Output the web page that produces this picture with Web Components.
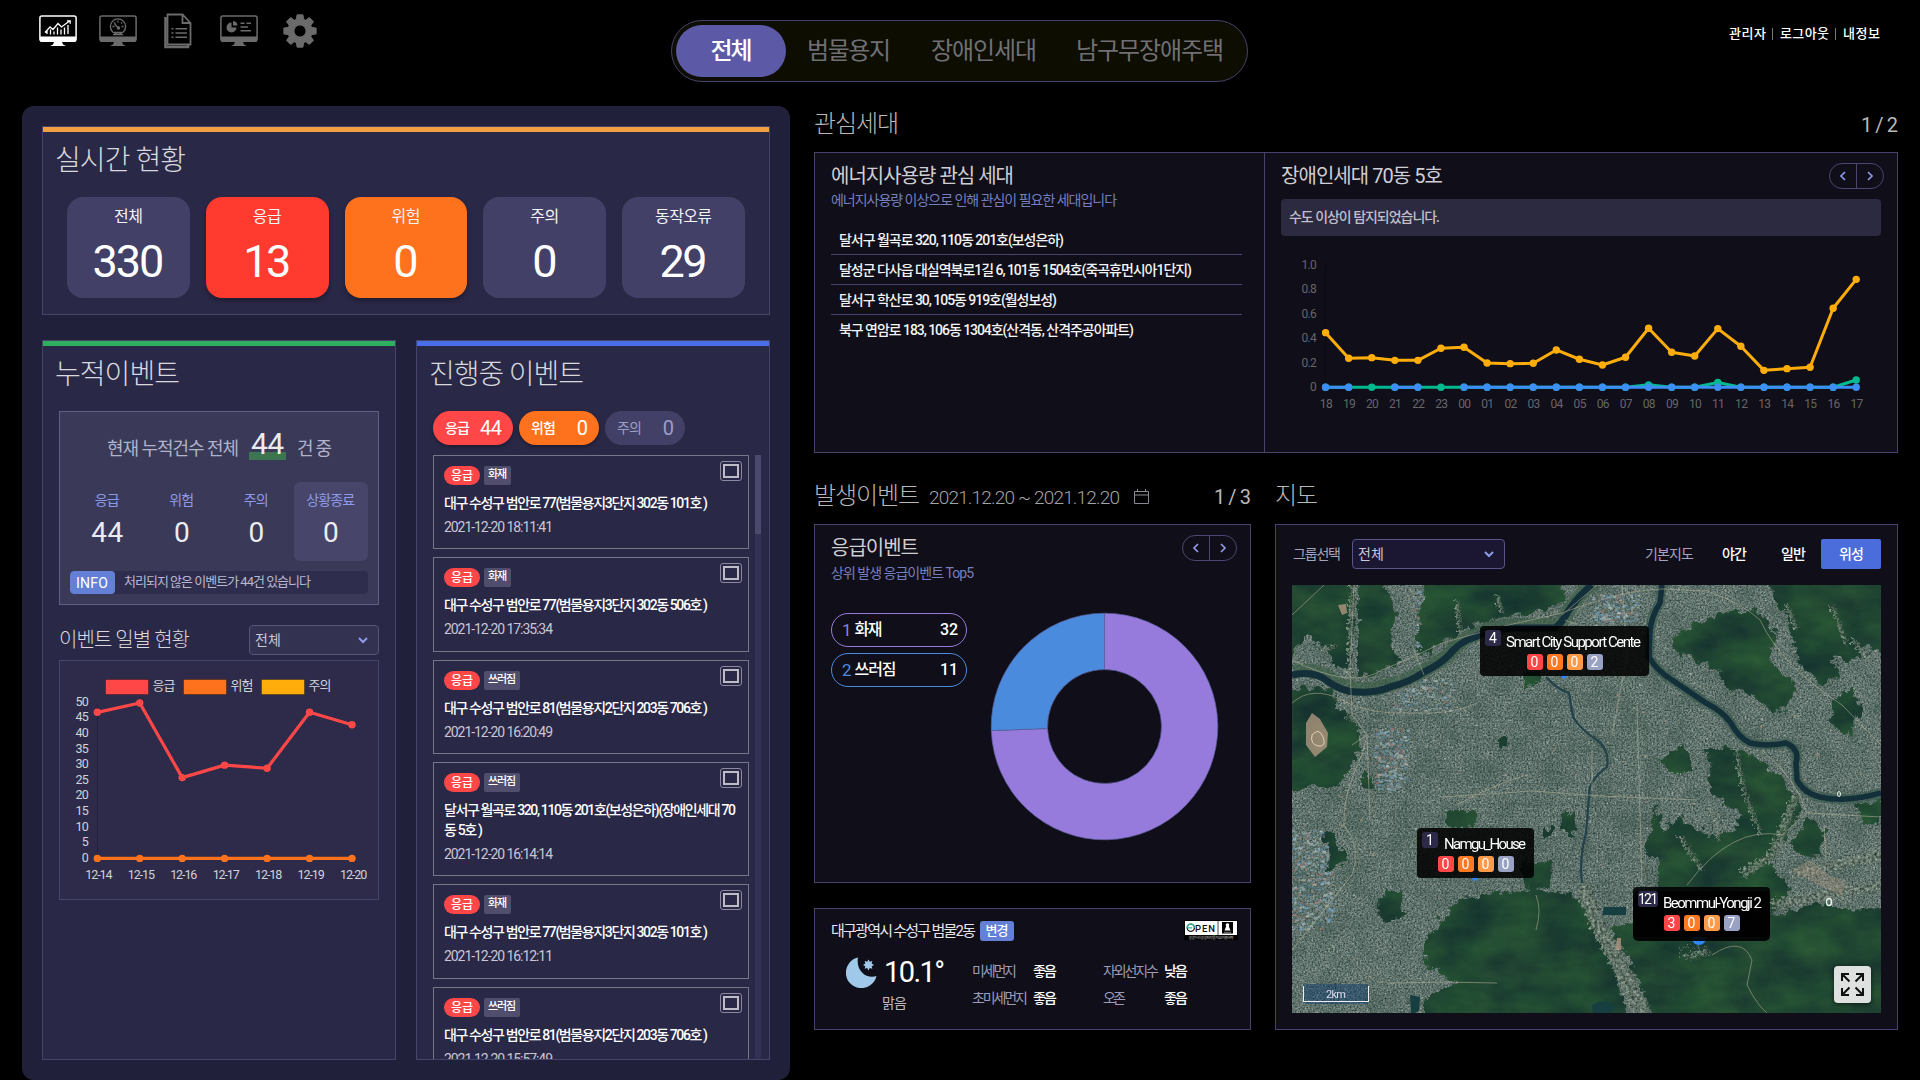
<!DOCTYPE html>
<html lang="ko">
<head>
<meta charset="utf-8">
<title>통합 관제 대시보드</title>
<style>
html,body{margin:0;background:#000;}
body{width:1920px;height:1080px;overflow:hidden;font-family:Roboto,"Noto Sans CJK KR",sans-serif;color:#ccc;}
</style>
</head>
<body>
<dash-app></dash-app>
<script>
const FONT='Roboto,"Noto Sans CJK KR",sans-serif';
const measureCtx=document.createElement('canvas').getContext('2d');
function mount(el,html){const r=el.attachShadow({mode:'open'});r.innerHTML=html;return r;}
const BOX='*,*:before{box-sizing:border-box}';

/* Single line of text tracked to a given width: s size, w width, c colour, b weight, lh line height */
class UiText extends HTMLElement{
  connectedCallback(){
    if(this.shadowRoot)return;
    const a=(n,d)=>this.getAttribute(n)||d;
    const s=a('s','14'),b=a('b','400'),c=a('c','inherit'),lh=a('lh','20'),w=this.getAttribute('w');
    let ls=-1;
    const t=this.textContent;
    if(w&&t.length>1){measureCtx.font=`${b} ${s}px ${FONT}`;ls=(parseFloat(w)+1-measureCtx.measureText(t).width)/(t.length-1);}
    mount(this,`<style>:host{display:block;white-space:pre;font-weight:${b};font-size:${s}px;color:${c};line-height:${lh}px;letter-spacing:${ls.toFixed(3)}px;margin-right:${(-ls).toFixed(3)}px;flex:none}</style><slot></slot>`);
  }
}
customElements.define('ui-text',UiText);

/* Toolbar icons */
const gear=(()=>{let d='';const n=8;for(let i=0;i<n;i++){const a=i*Math.PI*2/n-Math.PI/2;
  [[-.3,12.2],[-.18,16.4],[.18,16.4],[.3,12.2]].forEach(([o,r],k)=>{d+=(i||k?'L':'M')+(17+r*Math.cos(a+o)).toFixed(2)+' '+(17+r*Math.sin(a+o)).toFixed(2);});}
  return d+'Z M17 11a6 6 0 1 0 .01 0Z';})();
const monitor=inner=>`<svg width="38" height="32" viewBox="0 0 38 32" fill="none" stroke="currentColor"><rect x=".9" y=".9" width="36.2" height="25.2" rx="2" stroke-width="1.5"/><path d="M1 21.5h36v4.2q0 1.3-1.5 1.3h-33Q1 27 1 25.700z" fill="currentColor" stroke="none"/><path d="M15 27h8l1 2.600 3 1.400H11l3-1.400z" fill="currentColor" stroke="none"/>${inner}</svg>`;
const ICONS={
 chart:monitor('<path d="M6 17.500l5-5.500 3 2.500 5-6 3.500 3.500L30.500 6M28 5.800h3.200v3M8 19v-3M11.500 19.500v-5M15 19.500v-3M18.500 19.500v-7M22 19.500v-5M25.500 19.500v-7M29 19v-9" stroke-width="1.3"/>'),
 gauge:monitor('<circle cx="19" cy="11.500" r="7.600" stroke-width="1.400"/><path d="M19 5.500v2M13.500 11.500h2M22.500 11.500h2M15 7.500l1.400 1.400M23 7.500l-1 1M15.500 9l4 4" stroke-width="1.300"/><circle cx="19.500" cy="13" r="1.800" fill="currentColor" stroke="none"/><path d="M14 19.600h10M15 17.500h8" stroke-width="1.400"/>'),
 doc:'<svg width="28" height="36" viewBox="0 0 28 36" fill="none" stroke="currentColor" stroke-width="1.800"><path d="M3.500 1.500h15l8 8.500v21.500h-23zM18.500 1.500v8.500h8"/><path d="M1.500 4v30h22.500v-2" stroke-width="2.600"/><path d="M7.500 15.800h2M7.500 20h2M7.500 24.200h2M11.500 15.800h11.500M11.500 20h11.500M11.500 24.200h11.500" stroke-width="1.600"/></svg>',
 report:monitor('<path d="M11.500 7.500a5 5 0 1 0 5 5h-5z" fill="currentColor" stroke="none"/><path d="M13 6a5 5 0 0 1 4.500 4.500H13z" fill="currentColor" stroke="none"/><path d="M20.500 8.300h4M26.500 8.300h4.500M20.500 12h7.500M20.500 15.800h10.500" stroke-width="1.400"/>'),
 gear:`<svg width="34" height="34" viewBox="0 0 34 34"><path d="${gear}" fill="currentColor" fill-rule="evenodd" stroke="currentColor" stroke-width="1" stroke-linejoin="round"/></svg>`
};
class ToolIcon extends HTMLElement{connectedCallback(){if(this.shadowRoot)return;
  mount(this,`<style>:host{display:block;color:${this.hasAttribute('on')?'#fff':'#6b6b6b'}}svg{display:block}</style>${ICONS[this.getAttribute('name')]}`);}}
customElements.define('tool-icon',ToolIcon);

class TopBar extends HTMLElement{connectedCallback(){if(this.shadowRoot)return;
 mount(this,`<style>${BOX}:host{display:grid;grid-template-columns:632px 577px 1fr;height:106px;padding:0 40px 0 39px}
 .icons{display:flex;gap:22px;padding-top:15px;align-items:flex-start}
 .icons :nth-child(3){margin:-2px 6px 0 5px}.icons :nth-child(5){margin:-1px 0 0 3px}
 nav{margin-top:20px;height:62px;border:1px solid #45426b;border-radius:31px;background:#0d0d02;display:flex;align-items:center;padding-left:4px;color:#707074}
 .on{width:110px;height:52px;border-radius:26px;background:#5c5aa7;color:#fff;display:flex;justify-content:center;align-items:center}
 .user{display:flex;justify-content:flex-end;align-items:center;height:20px;margin-top:24px;color:#fff}
 i{width:1px;height:12px;background:#777;margin:0 7px 0 6px}</style>
 <div class="icons"><tool-icon name="chart" on></tool-icon><tool-icon name="gauge"></tool-icon><tool-icon name="doc"></tool-icon><tool-icon name="report"></tool-icon><tool-icon name="gear"></tool-icon></div>
 <nav><div class="on"><ui-text s="24" w="41" b="500" lh="50" style="padding-left:1px">전체</ui-text></div>
 <ui-text s="24" w="83" lh="50" style="margin-left:21px">범물용지</ui-text><ui-text s="24" w="105" lh="50" style="margin-left:40px">장애인세대</ui-text><ui-text s="24" w="147" lh="50" style="margin-left:39px">남구무장애주택</ui-text></nav>
 <div class="user"><ui-text s="13" w="36" b="500">관리자</ui-text><i></i><ui-text s="13" w="48" b="500">로그아웃</ui-text><i></i><ui-text s="13" w="36" b="500">내정보</ui-text></div>`);}}
customElements.define('top-bar',TopBar);

/* Framed card with coloured top bar */
class UiCard extends HTMLElement{connectedCallback(){if(this.shadowRoot)return;
 mount(this,`<style>${BOX}:host{display:flex;flex-direction:column;box-sizing:border-box;border:1px solid #46446b;background:#2a2847;overflow:hidden}
 .bar{height:5px;flex:none;background:${this.getAttribute('bar')}}.t{padding-left:12px;padding-top:1px;margin-top:7px;height:40px;flex:none;color:#d8d8de}</style>
 <div class="bar"></div><div class="t"><ui-text s="28" b="300" lh="42" w="${this.getAttribute('tw')}">${this.getAttribute('label')}</ui-text></div><slot></slot>`);}}
customElements.define('ui-card',UiCard);

class StatusTile extends HTMLElement{connectedCallback(){if(this.shadowRoot)return;
 const bg=this.getAttribute('bg')||'#434067';
 mount(this,`<style>:host{display:flex;flex:1;height:101px;border-radius:16px;background:${bg};flex-direction:column;align-items:center;color:#fff;${this.hasAttribute('bg')?'box-shadow:0 3px 5px rgba(0,0,0,.3)':''}}</style>
 <ui-text s="16" lh="40" c="#f4f4f8" w="${this.getAttribute('lw')}">${this.getAttribute('label')}</ui-text><ui-text s="45" lh="50" w="${this.getAttribute('vw')}">${this.getAttribute('value')}</ui-text>`);}}
customElements.define('status-tile',StatusTile);

class UiSelect extends HTMLElement{connectedCallback(){if(this.shadowRoot)return;
 mount(this,`<style>${BOX}:host{display:flex;box-sizing:border-box;align-items:center;justify-content:space-between;height:30px;border:1px solid var(--bd,#57557a);border-radius:4px;background:var(--bg,#343251);padding:0 10px 0 5px;color:#c8c8de}</style>
 <ui-text s="14" w="25" lh="28">전체</ui-text><svg width="10" height="7" viewBox="0 0 10 7" fill="none" stroke="#8e9ae8" stroke-width="2"><path d="M1 1l4 4 4-4"/></svg>`);}}
customElements.define('ui-select',UiSelect);

class CountSummary extends HTMLElement{connectedCallback(){if(this.shadowRoot)return;
 const col=(l,w,v,vw,on)=>`<div class="c${on?' on':''}"><ui-text s="14" w="${w}" lh="20" c="#8e9ae8">${l}</ui-text><ui-text s="28" w="${vw}" lh="34" c="#ececf0">${v}</ui-text></div>`;
 mount(this,`<style>${BOX}:host{display:block;box-sizing:border-box;height:194px;border:1px solid #625f87;background:#3a3957;padding:0 10px}
 .h{display:flex;align-items:center;padding-left:37px;height:70px;color:#b0b3cc}
 .n{margin:0 11px 0 10px;padding:0 2px;background:linear-gradient(#3d7550,#3d7550) 0 23px/100% 8px no-repeat;height:34px;margin-top:-2px}
 .g{display:grid;grid-template-columns:repeat(4,1fr)}.c{height:79px;display:flex;flex-direction:column;align-items:center;padding-top:8px;gap:6px}.on{background:#474569;border-radius:6px}
 .i{display:flex;margin-top:10px;height:23px;background:#2f2d4d;border-radius:4px;overflow:hidden;color:#b8b9d0}
 .b{width:45px;background:#6480d6;display:flex;padding-left:6px;color:#fff;border-radius:4px;margin-right:9px}</style>
 <div class="h"><ui-text s="18" w="131" lh="34" style="margin-top:3px">현재 누적건수 전체</ui-text><div class="n"><ui-text s="30" w="32" lh="30" c="#ececf0">44</ui-text></div><ui-text s="18" w="34" lh="34" style="margin-top:3px">건 중</ui-text></div>
 <div class="g">${col('응급',24,'44',31)}${col('위험',24,'0',15)}${col('주의',24,'0',15)}${col('상황종료',48,'0',15,1)}</div>
 <div class="i"><div class="b"><ui-text s="14" w="31" lh="24">INFO</ui-text></div><ui-text s="13" w="186" lh="22">처리되지 않은 이벤트가 44건 있습니다</ui-text></div>`);}}
customElements.define('count-summary',CountSummary);

const line=(pts,c,w,r)=>`<polyline points="${pts.map(p=>p.join()).join(' ')}" fill="none" stroke="${c}" stroke-width="${w}" stroke-linejoin="round"/>`+pts.map(p=>`<circle cx="${p[0]}" cy="${p[1]}" r="${r}" fill="${c}"/>`).join('');
class DailyChart extends HTMLElement{connectedCallback(){if(this.shadowRoot)return;
 const X=i=>97.3+i*42.45,Y=v=>858.4-v*3.108;let s='';
 [['응급','#ff4747',105],['위험','#ff721d',183],['주의','#ffad0a',261]].forEach(([t,c,x])=>{s+=`<rect x="${x+.5}" y="679.5" width="43" height="15" fill="${c}" stroke="#000" stroke-opacity=".3"/><text x="${x+47.5}" y="690" style="font-size:13px;letter-spacing:-1px">${t}</text>`;});
 for(let v=0;v<=50;v+=5)s+=`<text x="88" y="${857.4-v*3.12+4.3}" text-anchor="end">${v}</text>`;
 for(let i=0;i<7;i++)s+=`<text x="${X(i)+1-13}" y="879.3" style="letter-spacing:-1.1px">12-${14+i}</text>`;
 s+='<path d="M97.500 703v155" stroke="#232140"/>';
 s+=line([47,50,26,30,29,47,43].map((v,i)=>[X(i),Y(v)]),'#ff4747',3.2,3.7)+line([0,0,0,0,0,0,0].map((v,i)=>[X(i),Y(v)]),'#ff721d',3.2,3.7);
 mount(this,`<style>:host{display:block;box-sizing:border-box;height:240px;border:1px solid #46446b;background:#2d2b49}svg{display:block}text{font:12.5px ${FONT};fill:#d2d2da;letter-spacing:-.8px}</style><svg width="318" height="238" viewBox="60 661 318 238">${s}</svg>`);}}
customElements.define('daily-chart',DailyChart);

class CountPill extends HTMLElement{connectedCallback(){if(this.shadowRoot)return;
 const off=this.hasAttribute('off');
 mount(this,`<style>:host{display:flex;box-sizing:border-box;width:80px;height:34px;border-radius:17px;align-items:center;justify-content:space-between;padding:0 11px 0 12px;background:${this.getAttribute('bg')};color:${off?'#9b9ec4':'#fff'};${off?'':'box-shadow:0 2px 4px rgba(0,0,0,.35)'}}</style>
 <ui-text s="14" w="24" lh="34" b="${off?400:500}">${this.getAttribute('label')}</ui-text><ui-text s="20" w="${this.getAttribute('vw')}" lh="35">${this.getAttribute('value')}</ui-text>`);}}
customElements.define('count-pill',CountPill);

class EventItem extends HTMLElement{connectedCallback(){if(this.shadowRoot)return;
 const k=this.getAttribute('kind');
 mount(this,`<style>${BOX}:host{display:block;box-sizing:border-box;flex:none;position:relative;border:1px solid #77758a;padding:10px 10px 0;height:${this.hasAttribute('two')?114.2:94.4}px}
 .r{display:flex;gap:4px;height:19px;color:#fff;margin-bottom:8px}.a{width:36px;border-radius:10px;background:#ff4747;display:flex;justify-content:center}.k{padding:0 4px;background:#504e6c;border-radius:2px}
 .x{position:absolute;top:5px;right:6px;width:22px;height:20px;border:1px solid #8b89a0;border-radius:3px;padding:2px}.x:before{content:"";display:block;width:16px;height:14px;border:2px solid #bdbbc8}
 .d{margin-top:4px;width:max-content}</style>
 <div class="r"><div class="a"><ui-text s="12" w="21" lh="20" b="500">응급</ui-text></div><div class="k"><ui-text s="11" lh="18" b="500" w="${k.length>2?27:18}">${k}</ui-text></div></div>
 <slot></slot><ui-text class="d" s="14" w="108" lh="20" c="#c8c7d3">${this.getAttribute('time')}</ui-text><div class="x"></div>`);}}
customElements.define('event-item',EventItem);

class LivePanel extends HTMLElement{connectedCallback(){if(this.shadowRoot)return;
 const ev=(k,t,a)=>`<event-item kind="${k}" time="${t}"${a[1]?' two':''}>${a.map(l=>`<ui-text s="14" b="500" lh="20" c="#fff" w="${l[1]}">${l[0]}</ui-text>`).join('')}</event-item>`;
 const A=[['대구 수성구 범안로 77(범물용지3단지 302동 101호 )',263]],B=[['대구 수성구 범안로 77(범물용지3단지 302동 506호 )',263]],C=[['대구 수성구 범안로 81(범물용지2단지 203동 706호 )',263]],D=[['달서구 월곡로 320, 110동 201호(보성은하)(장애인세대 70',291],['동 5호 )',38]];
 mount(this,`<style>${BOX}:host{display:flex;flex-direction:column;box-sizing:border-box;width:768px;height:974px;border-radius:12px;background:#21203b;padding:20px;gap:25px}
 .tiles{display:flex;gap:16px;padding:18px 24px 0}.two{display:flex;gap:20px;height:720px}.two>*{flex:1;min-width:0}
 .in{padding:18px 16px 0;display:flex;flex-direction:column}.row{display:flex;justify-content:space-between;align-items:center;margin-top:20px;margin-bottom:5px;height:30px;color:#d8d8de}
 .row ui-select{width:130px;--bg:#343251}
 .pills{display:flex;gap:6px}.list{display:flex;margin-top:10px;height:604px;justify-content:space-between}
 .items{display:flex;flex-direction:column;gap:8px;width:316px;flex:none;height:604px;overflow:hidden}.sb{width:6px;background:#333155;border-radius:3px}.sb:before{content:"";display:block;height:79px;background:#4b496f}</style>
 <ui-card bar="#f0a040" label="실시간 현황" tw="130" style="height:189px"><div class="tiles">
 <status-tile label="전체" lw="28" value="330" vw="71"></status-tile><status-tile label="응급" lw="28" value="13" vw="47" bg="#ff3b30"></status-tile><status-tile label="위험" lw="28" value="0" vw="23" bg="#ff721d"></status-tile><status-tile label="주의" lw="28" value="0" vw="23"></status-tile><status-tile label="동작오류" lw="56" value="29" vw="47"></status-tile></div></ui-card>
 <div class="two"><ui-card bar="#2fae60" label="누적이벤트" tw="124"><div class="in"><count-summary></count-summary><div class="row"><ui-text s="20" b="300" w="130" lh="30">이벤트 일별 현황</ui-text><ui-select></ui-select></div><daily-chart></daily-chart></div></ui-card>
 <ui-card bar="#4a6ee8" label="진행중 이벤트" tw="154"><div class="in" style="padding-right:8px"><div class="pills"><count-pill bg="#ff4747" label="응급" value="44" vw="21"></count-pill><count-pill bg="#ff721d" label="위험" value="0" vw="11"></count-pill><count-pill bg="#434067" label="주의" value="0" vw="11" off></count-pill></div>
 <div class="list"><div class="items">${ev('화재','2021-12-20 18:11:41',A)}${ev('화재','2021-12-20 17:35:34',B)}${ev('쓰러짐','2021-12-20 16:20:49',C)}${ev('쓰러짐','2021-12-20 16:14:14',D)}${ev('화재','2021-12-20 16:12:11',A)}${ev('쓰러짐','2021-12-20 15:57:49',C)}</div><div class="sb"></div></div></div></ui-card></div>`);}}
customElements.define('live-panel',LivePanel);

class UiPager extends HTMLElement{connectedCallback(){if(this.shadowRoot)return;
 mount(this,`<style>:host{display:block;flex:none;width:55px;height:26px}svg{display:block}</style><svg width="55" height="26" fill="none"><rect x=".5" y=".5" width="54" height="25" rx="12.500" stroke="#4a4770"/><path d="M27.500 0v26" stroke="#4a4770"/><path d="M16 9l-4 4 4 4M39 9l4 4-4 4" stroke="#8e9ae8" stroke-width="1.700"/></svg>`);}}
customElements.define('ui-pager',UiPager);

class UsageChart extends HTMLElement{connectedCallback(){if(this.shadowRoot)return;
 const X=i=>1325.6+i*23.07,Y=v=>387.3-v*122;let s='<path d="M1325.500 265v122" stroke="#0a0a0f"/>';
 ['0','0.2','0.4','0.6','0.8','1.0'].forEach((t,i)=>s+=`<text x="1316" y="${391-i*24.4}" text-anchor="end">${t}</text>`);
 for(let i=0;i<24;i++)s+=`<text x="${X(i)+.3}" y="408" text-anchor="middle">${String((18+i)%24).padStart(2,'0')}</text>`;
 const V=[.448,.238,.243,.221,.221,.32,.328,.199,.194,.197,.306,.23,.183,.246,.484,.287,.257,.481,.336,.139,.153,.164,.648,.885];
 const G=V.map((_,i)=>i==14?.02:i==17?.04:i==23?.06:0);
 s+=line(V.map((v,i)=>[X(i),Y(v)]),'#ffad0a',3,3.7)+line(G.map((v,i)=>[X(i),Y(v)]),'#00b98e',3,3.7);
 [[0,1],[3,4],[6,23]].forEach(([a,b])=>{const p=[];for(let i=a;i<=b;i++)p.push([X(i),Y(0)]);s+=line(p,'#3d8ef5',3,3.7);});
 mount(this,`<style>:host{display:block}svg{display:block}text{font:12px ${FONT};fill:#66666a;letter-spacing:-.7px}</style><svg width="605" height="170" viewBox="1275 250 605 170">${s}</svg>`);}}
customElements.define('usage-chart',UsageChart);

class WatchPanel extends HTMLElement{connectedCallback(){if(this.shadowRoot)return;
 const r=(t,w)=>`<div class="r"><ui-text s="14" b="500" lh="30" w="${w}">${t}</ui-text></div>`;
 mount(this,`<style>${BOX}:host{display:grid;grid-template-columns:450px 632px;box-sizing:border-box;height:301px;border:1px solid #45426b;background:#100e18}
 .a{padding:8px 22px 0 16px;border-right:1px solid #45426b}.r{height:30px;border-bottom:1px solid #45446e;padding-left:8px;color:#f4f4f6}.r:last-child{border:0}.l{margin-top:15px}
 .b{padding:0 16px;min-width:0}.h{display:flex;justify-content:space-between;align-items:flex-start;height:46px;color:#cfcfd3}.h ui-pager{margin:10px -3px 0 0}.h ui-text{margin-top:8px}
 .m{height:37px;background:#2c2a40;border-radius:4px;padding-left:8px;color:#bfbeca}usage-chart{margin:14px 0 0 -6px}</style>
 <div class="a"><ui-text s="20" w="182" lh="30" c="#cfcfd3" style="width:max-content">에너지사용량 관심 세대</ui-text><ui-text s="14" w="285" lh="19" c="#757fbe">에너지사용량 이상으로 인해 관심이 필요한 세대입니다</ui-text>
 <div class="l">${r('달서구 월곡로 320, 110동 201호(보성은하)',224)}${r('달성군 다사읍 대실역북로1길 6, 101동 1504호(죽곡휴먼시아1단지)',352)}${r('달서구 학산로 30, 105동 919호(월성보성)',217)}${r('북구 연암로 183, 106동 1304호(산격동, 산격주공아파트)',294)}</div></div>
 <div class="b"><div class="h"><ui-text s="20" w="161" lh="30">장애인세대 70동 5호</ui-text><ui-pager></ui-pager></div><div class="m"><ui-text s="14" w="150" lh="36" b="500">수도 이상이 탐지되었습니다.</ui-text></div><usage-chart></usage-chart></div>`);}}
customElements.define('watch-panel',WatchPanel);

class EventRank extends HTMLElement{connectedCallback(){if(this.shadowRoot)return;
 const cx=1104.5,cy=726.5,R=113.3,q=57,t=32/43*2*Math.PI,P=(r,a)=>(cx+r*Math.sin(a)).toFixed(2)+' '+(cy-r*Math.cos(a)).toFixed(2);
 const arc=(a,b,c)=>{const l=b-a>Math.PI?1:0;return `<path d="M${P(R,a)}A${R} ${R} 0 ${l} 1 ${P(R,b)}L${P(q,b)}A${q} ${q} 0 ${l} 0 ${P(q,a)}Z" fill="${c}" stroke="#5a5f9c" stroke-width=".7"/>`;};
 mount(this,`<style>${BOX}:host{display:flex;flex-direction:column;box-sizing:border-box;height:359px;border:1px solid #45426b;background:#100e18;padding:0 14px 0 16px}
 .h{display:flex;justify-content:space-between;height:85px}.h ui-pager{margin:10px -1px 0 0}.b{display:flex}
 .l{width:136px;display:flex;flex-direction:column;gap:6px;padding-top:3px}.p{height:34px;border:1px solid;border-radius:17px;display:flex;align-items:center;padding:0 8px 0 10px;gap:3px}.p .v{margin-left:auto}svg{display:block;margin-left:8px}</style>
 <div class="h"><div style="padding-top:8px"><ui-text s="20" w="87" lh="30" c="#cfcfd3" style="width:max-content">응급이벤트</ui-text><ui-text s="14" w="142" lh="20" c="#757fbe">상위 발생 응급이벤트 Top5</ui-text></div><ui-pager></ui-pager></div>
 <div class="b"><div class="l"><div class="p" style="color:#977bdc"><ui-text s="17" w="9" lh="32">1</ui-text><ui-text s="16" w="27" b="500" lh="32" c="#fff">화재</ui-text><ui-text class="v" s="16" w="17" b="500" lh="32" c="#fff">32</ui-text></div>
 <div class="p" style="color:#4b8bdd"><ui-text s="17" w="9" lh="32">2</ui-text><ui-text s="16" w="41" b="500" lh="32" c="#fff">쓰러짐</ui-text><ui-text class="v" s="16" w="17" b="500" lh="32" c="#fff">11</ui-text></div></div>
 <svg width="260" height="240" viewBox="975 610 260 240">${arc(0,t,'#977bdc')}${arc(t,2*Math.PI,'#4b8bdd')}</svg></div>`);}}
customElements.define('event-rank',EventRank);

class WeatherCard extends HTMLElement{connectedCallback(){if(this.shadowRoot)return;
 const g=(t,w,v)=>`<ui-text s="14" w="${w}" c="#9a9cb8">${t}</ui-text><ui-text s="14" w="23" b="500" c="#fff">${v}</ui-text>`;
 mount(this,`<style>${BOX}:host{display:block;box-sizing:border-box;height:122px;border:1px solid #45426b;background:#100e18;padding:11px 12px 0 16px}
 .t{display:flex;height:22px;align-items:flex-start;color:#e6e6ea}.bt{width:34px;height:20px;margin:1px 0 0 4px;background:#6480d6;border-radius:3px;color:#fff;display:flex;justify-content:center}
 .logo{margin-left:auto}.b{display:flex;margin-top:13px;align-items:flex-start}.w{width:141px;padding-left:15px}.x{display:flex;gap:7px;height:34px;align-items:center}
 .g{display:grid;grid-template-columns:61px 70px 61px 40px;row-gap:7px;padding-top:6px;align-content:start}.g>*{width:max-content}</style>
 <div class="t"><ui-text s="15" w="144" lh="22">대구광역시 수성구 범물2동</ui-text><div class="bt"><ui-text s="13" w="22" b="500">변경</ui-text></div>
 <svg class="logo" width="54" height="20" viewBox="0 0 54 20"><rect width="54" height="20" fill="#000"/><rect x="1" y="1" width="52" height="14" fill="#fff"/><circle cx="6.800" cy="7.800" r="3.600" fill="none" stroke="#222" stroke-width="1.300"/><path d="M3.200 7.800a3.600 3.600 0 0 1 7.200 0M3.200 7.800h5" fill="none" stroke="#2bb5a0" stroke-width="1.300"/><text x="11" y="11.500" font-size="9.500" font-weight="500" font-family="Roboto" textLength="20" fill="#111">PEN</text><path d="M34 1v14" stroke="#222" stroke-width=".8"/><rect x="38" y="2" width="11" height="11.500" fill="#000"/><path d="M43.500 3.200a1.800 1.800 0 0 1 1.300 3l1.700 4.300h-6l1.700-4.300a1.800 1.800 0 0 1 1.300-3z" fill="#fff"/><path d="M40 12.300h7" stroke="#aaa" stroke-width=".7"/><text x="4.500" y="18.800" font-size="3.800" fill="#ccc" font-family="Noto Sans CJK KR" textLength="45">공공누리 공공저작물 자유이용허락</text></svg></div>
 <div class="b"><div class="w"><div class="x"><svg width="31" height="31" viewBox="0 0 31 31"><path d="M12 0.500A15.500 15.500 0 1 0 30.500 19C21 22.500 9.500 14 12 .500z" fill="#a0c8e8"/><path d="M22.500 2.500l1.300 2.300 2.500-.700-.600 2.500 2.300 1.300-2.300 1.300.600 2.500-2.500-.600-1.300 2.300-1.300-2.300-2.500.600.600-2.500-2.300-1.300 2.300-1.300-.600-2.500 2.500.700z" fill="#a0c8e8"/></svg><ui-text s="29" w="60" c="#fff" lh="34">10.1°</ui-text></div><ui-text s="14" w="24" c="#bbbbc1" lh="20" style="margin:4px 0 0 36px">맑음</ui-text></div>
 <div class="g">${g('미세먼지',44,'좋음')}${g('자외선지수',55,'낮음')}${g('초미세먼지',55,'좋음')}${g('오존',22,'좋음')}</div></div>`);}}
customElements.define('weather-card',WeatherCard);

class MapMarker extends HTMLElement{connectedCallback(){if(this.shadowRoot)return;
 const v=this.getAttribute('v').split(''),c=['#ff4747','#ff7a22','#ff9a48','#9aa2c4'],n=this.getAttribute('n');
 mount(this,`<style>${BOX}:host{display:block;position:absolute;box-sizing:border-box;height:50px;border-radius:4px;background:rgba(0,0,0,.86);color:#fff}
 .n{position:absolute;left:5px;top:4px;height:16px;min-width:16px;border-radius:3px;background:#2c2a48;display:flex;justify-content:center}
 .c{display:flex;gap:4px;position:absolute;top:28px;left:0;right:0;justify-content:center}.c>*{width:16px;height:16px;border-radius:3px;display:flex;justify-content:center}
 .t{position:absolute;top:6px;right:8px}</style>
 <div class="n"><ui-text s="14" lh="17" w="${n.length>1?19:8}">${n}</ui-text></div><div class="t"><ui-text s="15" lh="20" w="${this.getAttribute('tw')}">${this.getAttribute('label')}</ui-text></div><div class="c">${v.map((x,i)=>`<span style="background:${c[i]}"><ui-text s="14" lh="17" w="8">${x}</ui-text></span>`).join('')}</div>`);}}
customElements.define('map-marker',MapMarker);

/* Satellite map: procedural terrain (urban grain, forest, rivers, roads) in a 589x428 space */
class SatMap extends HTMLElement{connectedCallback(){if(this.shadowRoot)return;
 const forest=['-10 -10 62 -10 58 85 45 82 30 60 15 50 -10 84','66 -10 83 -10 100 12 103 30 98 55 110 75 85 88 66 92','132 -10 270 -10 272 18 240 28 205 32 180 42 150 58 125 74 125 50 130 30',
 '443 25 469 27 484 48 479 75 505 105 486 128 452 107 433 102 427 88 406 75 378 62 389 45 414 35','472 -10 600 -10 600 72 572 60 560 76 540 70 548 94 520 86 500 55 490 25','540 110 560 105 570 125 558 150 540 140','500 45 520 70 545 95 530 100 508 80',
 '-10 102 14 103 40 105 48 125 69 145 65 172 58 185 44 202 23 202 -10 204','363 220 372 245 389 232 400 240 418 252 443 245 448 228 420 208 414 165 418 162 452 165 490 192 511 225 490 255 477 278 500 305 479 330 362 325 368 275 351 265 361 238',
 '515 232 532 245 530 272 511 273 496 262','149 335 170 312 204 308 237 305 279 308 292 322 305 352 321 382 338 440 132 440 132 412 165 398 132 378 130 362',
 '364 440 338 378 317 342 330 340 350 332 380 320 420 322 479 330 528 318 560 325 600 322 600 440','31 248 42 246 47 262 55 275 45 284 36 285 34 262','152 235 160 226 180 226 186 236 180 243 156 242','86 318 98 304 112 306 110 332 98 338 88 334','272 228 282 228 285 248 272 248','252 244 260 242 260 252 252 252','232 276 262 276 258 300 240 306 230 298','206 156 212 150 216 160 208 166','230 90 240 70 250 95 232 105','365 175 392 160 402 182 385 192','564 220 589 215 589 240 575 238','72 190 82 190 80 205 72 204'];
 const urb=['M290 300L305 338L326 378L352 428','M445 165Q450 210 470 250','M388 250L410 285','M420 225Q432 238 425 255','M392 372L415 366','M60 0L56 130','M540 20L555 60M560 55L580 75M495 20L505 45','M450 290L480 270L505 210','M480 320L589 300M500 290L589 270','M30 65L44 60','M165 15L170 60M205 10L210 28'];
 const r1='M0 90Q18 86 31 93Q50 108 67 107Q84 108 98 102Q118 97 132 87Q147 80 157 70Q167 57 183 52Q200 44 220 43L263 43Q270 38 275 28Q285 12 300 0',
 r2='M370 0L368 18Q360 30 358 45L357 72Q364 85 380 95L414 118Q430 126 439 138Q446 152 458 158Q475 162 494 158Q508 164 504 178L505 195Q512 208 528 212Q555 218 589 208',
 st='M254 92Q265 104 277 108Q279 120 281 132Q290 146 305 155Q318 165 315 182Q296 195 297 212L294 248Q287 275 290 298';
 const roads=['M0 75Q60 105 90 85Q115 75 150 58Q210 40 270 28Q330 5 370 4L415 6Q450 18 468 35Q480 60 500 80Q520 100 550 120L589 160','M0 118Q20 100 50 115Q75 130 120 128Q160 130 185 118','M62 0L58 85L60 130L75 150L70 170Q50 210 52 240Q70 262 60 290L0 365','M0 30L32 0','M60 160L75 150L78 235','M165 220Q200 200 235 190','M150 212L240 206L310 211L405 215','M120 60L132 90M273 35L285 40','M305 0L270 30','M395 300Q440 240 490 250L515 228L589 232','M515 228Q505 195 470 165','M420 370Q450 350 460 375L455 400Q465 420 475 428','M330 0L335 70L320 150','M95 398L150 397L205 398','M532 240L534 275','M300 165L300 205M345 120L350 300','M244 310Q250 325 244 345'];
 let grid='';for(let i=0;i<26;i++){grid+=`M${78+i*12} ${118+(i%3)*6}l${(i%4)-2} 190`;}for(let i=0;i<19;i++)grid+=`M${60+(i%3)*9} ${110+i*11}l300 ${(i%3)-1}`;
 /* small deterministic roofs and plots */
 let seed=7;const rnd=()=>(seed=(seed*16807)%2147483647)/2147483647;let dots='';
 const cols=['#c9ccc2','#c9a890','#dfe2dc','#93b0b8','#a8a596','#2c4038','#35463f'];
 for(let i=0;i<1500;i++){const x=rnd()*589,y=rnd()*428;dots+=`<rect x="${x.toFixed(1)}" y="${y.toFixed(1)}" width="${(1+rnd()*1.6).toFixed(1)}" height="${(1+rnd()*1.3).toFixed(1)}" fill="${cols[rnd()*7|0]}" opacity="${(.35+rnd()*.5).toFixed(2)}"/>`;}
 let roofs='';const bc=['#7fb0cf','#5f93b8','#a9c4d0','#a8746a','#c9ccc4','#3c5c66'];
 [[300,8,46,28,170],[82,142,33,62,260],[0,245,40,100,380],[100,90,60,35,120],[120,5,14,60,40]].forEach(([x,y,w,h,n])=>{for(let i=0;i<n;i++)roofs+=`<rect x="${(x+rnd()*w).toFixed(1)}" y="${(y+rnd()*h).toFixed(1)}" width="${(1.5+rnd()*2.5).toFixed(1)}" height="${(1+rnd()*1.5).toFixed(1)}" fill="${bc[rnd()*6|0]}" opacity=".5"/>`;});
 const poly=l=>l.map(p=>`<polygon points="${p}"/>`).join('');
 mount(this,`<style>${BOX}:host{display:block;position:relative;width:589px;height:428px;overflow:hidden}svg{display:block}
 .scale{position:absolute;left:11px;top:399px;width:66px;height:20px;background:rgba(0,50,110,.4);border-radius:3px}.scale div{margin:2px 0 0;height:16px;border:1px solid #eee;border-top:0;display:flex;justify-content:center}
 .full{position:absolute;left:542px;top:381px;width:37px;height:37px;background:#dfe1e0;border-radius:4px;box-shadow:0 1px 4px rgba(0,0,0,.6)}
 .ghost{position:absolute;left:341px;top:306px;width:137px;height:50px;background:rgba(0,0,0,.9);border-radius:5px}</style>
 <svg width="589" height="428" viewBox="0 0 589 428"><defs>
 <filter id="u" x="0" y="0" width="100%" height="100%" color-interpolation-filters="sRGB"><feTurbulence type="fractalNoise" baseFrequency=".6" numOctaves="2" seed="4"/><feColorMatrix values=".6 .15 0 0 .01  .58 .15 0 0 .09  .56 .15 .05 0 .05  0 0 0 0 1"/></filter>
 <filter id="v" x="0" y="0" width="100%" height="100%" color-interpolation-filters="sRGB"><feTurbulence type="fractalNoise" baseFrequency=".04" numOctaves="5" seed="9"/><feColorMatrix values="0 0 0 0 .15  0 0 0 0 .27  0 0 0 0 .23  2.200 0 0 0 -.9"/></filter>
 <filter id="f" filterUnits="userSpaceOnUse" x="0" y="0" width="589" height="428" color-interpolation-filters="sRGB"><feTurbulence type="fractalNoise" baseFrequency=".12" numOctaves="4" seed="3" result="n"/><feDisplacementMap in="SourceGraphic" in2="n" scale="14" xChannelSelector="R" yChannelSelector="G" result="d"/><feTurbulence type="fractalNoise" baseFrequency=".02 .035" numOctaves="5" seed="12"/><feColorMatrix values=".12 0 0 0 .065  .2 .05 0 0 .15  .03 0 0 0 .18  0 0 0 0 1"/><feComposite in2="d" operator="in"/></filter>
 <filter id="s" filterUnits="userSpaceOnUse" x="0" y="0" width="589" height="428" color-interpolation-filters="sRGB"><feTurbulence type="fractalNoise" baseFrequency=".35" numOctaves="3" seed="8" result="n"/><feDisplacementMap in="SourceGraphic" in2="n" scale="12" xChannelSelector="R" yChannelSelector="G" result="d"/><feColorMatrix in="n" values="1 0 0 0 -.09  1 0 0 0 -.03  .9 0 0 0 -.03  0 0 0 0 1"/><feComposite in2="d" operator="in"/></filter></defs>
 <rect width="589" height="428" filter="url(#u)"/><rect width="589" height="428" filter="url(#v)" opacity=".3"/>
 <path d="${grid}" stroke="#33504c" stroke-width=".7" fill="none" opacity=".35"/>${roofs}
 <g opacity=".6">${dots}</g>
 <g filter="url(#f)">${poly(forest)}</g>
 <g filter="url(#s)" fill="none" stroke="#fff" opacity=".7">${urb.map((d,i)=>`<path d="${d}" stroke-width="${i==0?14:i>=7&&i<=8?9:4}"/>`).join('')}<ellipse cx="403" cy="367" rx="16" ry="6"/></g>
 <g fill="#c4a38c" opacity=".7"><path d="M14 138l6-10 8 6 8 14-1 14-12 10-9-12z"/><path d="M500 285l18-10 20 16 16 4-4 16-26-12z" opacity=".4"/><path d="M46 20l8-1 1 9-5 2z"/><path d="M325 353h4v12h-5z"/></g><path d="M20 150q7-8 11 2t-5 9q-8-2-6-11z" fill="none" stroke="#e8cdb8"/>
 <path d="${r1}" transform="translate(2 -3)" stroke="#3a5c45" stroke-width="14" fill="none" opacity=".65"/><path d="${r2}" stroke="#35574b" stroke-width="10" fill="none" opacity=".6"/>
 <g fill="none" stroke="#132f3a"><path d="${r1}" stroke-width="7"/><path d="${r2}" stroke-width="5.500"/><path d="${st}" stroke-width="2.300" stroke="#23424a"/></g>
 <path d="M312 322h22v8h-24zM118 410l10 2-1 14-8 4zM300 420q14-8 22 2l-3 6h-18z" fill="#173f42"/>
 <g fill="none" stroke="#b9b29a" stroke-width="1" opacity=".55">${roads.map(d=>`<path d="${d}"/>`).join('')}</g>
 <g fill="none" stroke="#e4eee6" stroke-width="1.500"><ellipse cx="537" cy="317" rx="2.500" ry="3.500"/><ellipse cx="547" cy="209" rx="1.500" ry="2.500" stroke-width="1"/></g>
 <g fill="#2f86f6"><circle cx="272" cy="91" r="2.600"/><circle cx="183" cy="293" r="2.600"/><circle cx="407" cy="353" r="7"/></g></svg>
 <map-marker style="left:188px;top:41px;width:169px" n="4" label="Smart City Support Cente" tw="134" v="0002"></map-marker>
 <map-marker style="left:125px;top:243px;width:117px" n="1" label="Namgu_House" tw="81" v="0000"></map-marker>
 <div class="ghost"></div><map-marker style="left:341px;top:302px;width:137px" n="121" label="Beommul-Yongji 2" tw="98" v="3007"></map-marker>
 <div class="scale"><div><ui-text s="11" w="19" lh="17" c="#dde">2km</ui-text></div></div>
 <div class="full"><svg width="37" height="37" fill="none" stroke="#111" stroke-width="2"><path d="M8 15V8h7M22 8h7v7M29 22v7h-7M15 29H8v-7M8 8l7.500 7.500M29 8l-7.500 7.500M29 29l-7.500-7.500M8 29l7.500-7.500"/></svg></div>`);}}
customElements.define('sat-map',SatMap);

class MapPanel extends HTMLElement{connectedCallback(){if(this.shadowRoot)return;
 mount(this,`<style>${BOX}:host{display:block;box-sizing:border-box;height:506px;border:1px solid #45426b;background:#100e18;padding:14px 16px 0}
 .t{display:flex;height:30px;align-items:center;margin-bottom:16px;padding-left:1px;color:#a3a5bd;width:589px}ui-select{width:153px;margin-left:11px;--bg:#1b1733;--bd:#57558a}
 .r{margin-left:auto;display:flex;align-items:center;color:#fff}.b{width:60px;height:30px;background:#4a6ddb;border-radius:2px;display:flex;justify-content:center;padding-left:1px;margin-left:15px}</style>
 <div class="t"><ui-text s="14" w="47" lh="28">그룹선택</ui-text><ui-select></ui-select><div class="r"><ui-text s="14" w="48" lh="28" c="#a3a5bd">기본지도</ui-text><ui-text s="14" w="24" b="500" lh="30" style="margin-left:28px">야간</ui-text><ui-text s="14" w="24" b="500" lh="30" style="margin-left:34px">일반</ui-text><div class="b"><ui-text s="14" w="24" b="500" lh="30">위성</ui-text></div></div></div><sat-map></sat-map>`);}}
customElements.define('map-panel',MapPanel);

class DashApp extends HTMLElement{connectedCallback(){if(this.shadowRoot)return;
 mount(this,`<style>${BOX}:host{display:block;width:1920px;height:1080px;overflow:hidden;background:#000}
 main{display:flex;padding-left:22px;gap:24px}.right{width:1084px}.h{display:flex;color:#b8b8b8;height:46px;align-items:flex-start}.h .n{margin-left:auto}
 .g{display:grid;grid-template-columns:437px 623px;gap:24px}.g>div{display:flex;flex-direction:column}.h2{height:71px;padding-top:25px}weather-card{margin-top:25px}</style>
 <top-bar></top-bar><main><live-panel></live-panel><div class="right">
 <div class="h"><ui-text s="24" b="300" w="84" lh="36">관심세대</ui-text><ui-text class="n" s="20" w="36" lh="39">1 / 2</ui-text></div><watch-panel></watch-panel>
 <div class="g"><div><div class="h h2"><ui-text s="24" b="300" w="105" lh="36">발생이벤트</ui-text><ui-text s="19" b="300" w="190" lh="40" c="#a4a4a4" style="margin-left:9px">2021.12.20 ~ 2021.12.20</ui-text><svg width="15" height="16" viewBox="0 0 15 16" style="margin:11px 0 0 14px" fill="none" stroke="#8a8a94"><path d="M.5 2.500h14v12H.5zM.5 6h14M3.500 0v3M11.500 0v3"/></svg><ui-text class="n" s="20" w="36" lh="39">1 / 3</ui-text></div><event-rank></event-rank><weather-card></weather-card></div>
 <div><div class="h h2"><ui-text s="24" b="300" w="42" lh="36">지도</ui-text></div><map-panel></map-panel></div></div></div></main>`);}}
customElements.define('dash-app',DashApp);
</script>
</body>
</html>
